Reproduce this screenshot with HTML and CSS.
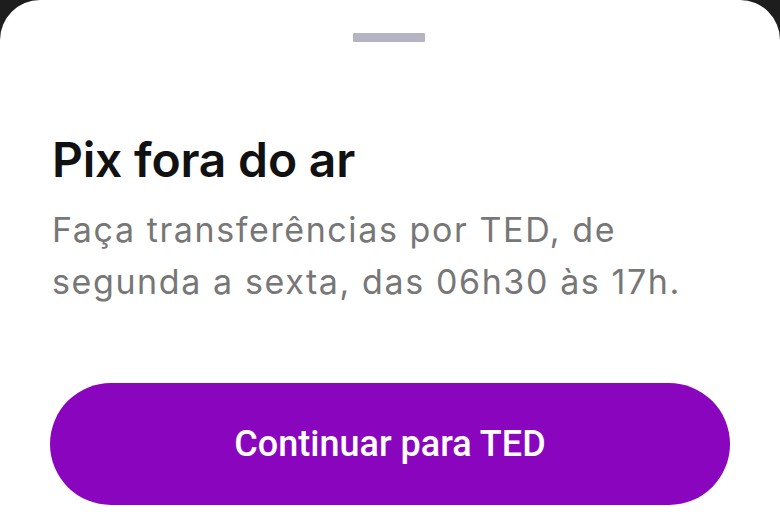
FILE: index.html
```html
<!DOCTYPE html>
<html lang="pt-BR">
<head>
    <meta charset="UTF-8">
    <meta name="viewport" content="width=device-width, initial-scale=1.0">
    <title>Pix fora do ar</title>
    <link rel="stylesheet" href="styles.css">
</head>
<body>

<div class="sheet">
    <div class="handle"></div>

    <h1 class="title">Pix fora do ar</h1>
    <p class="message">Faça transferências por TED, de segunda a sexta, das 06h30 às 17h.</p>

    <button type="button" class="primary">Continuar para TED</button>
</div>

</body>
</html>
```

FILE: styles.css
```css
html, body {
    height: 100%;
}

body {
    background-color: #1d1d1d;
    margin: 0;
    font-family: Inter, "Noto Sans", sans-serif;
    overflow: hidden;
}

.sheet {
    background-color: #ffffff;
    border-radius: 40px 40px 0 0;
    height: 100%;
    box-sizing: border-box;
    padding: 33px 50px 0 52px;
    display: flex;
    flex-direction: column;
}

.handle {
    align-self: center;
    width: 72px;
    height: 9px;
    margin-left: -4px;
    background-color: #b4b4c2;
    border-radius: 1px;
}

.title {
    margin: 90px 0 0;
    font-size: 48px;
    font-weight: 600;
    line-height: 56px;
    color: #111111;
    letter-spacing: -0.2px;
}

.message {
    max-width: 660px;
    margin: 16px 0 0;
    font-size: 34px;
    line-height: 52px;
    color: #777777;
    letter-spacing: 1.6px;
}

.primary {
    margin-top: 75px;
    margin-left: -2px;
    height: 122px;
    border: none;
    border-radius: 61px;
    background-color: #8a05be;
    color: #ffffff;
    font-family: Roboto, sans-serif;
    font-size: 36px;
    font-weight: 500;
    cursor: pointer;
}
```
